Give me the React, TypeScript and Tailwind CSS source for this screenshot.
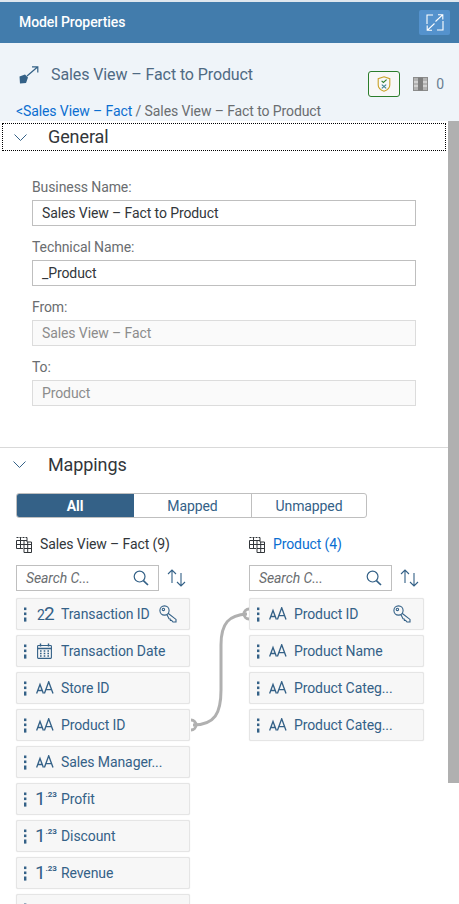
import React from "react";

const blue = "#346187";

function Grip() {
  return (
    <svg width="3" height="15" viewBox="0 0 3 15" className="shrink-0">
      {[0, 5, 10].map((y) => (
        <rect key={y} x="0" y={y + 0.5} width="2.4" height="2.6" fill={blue} />
      ))}
      <rect x="0" y="13" width="2.4" height="1.6" fill={blue} />
    </svg>
  );
}

function KeyIcon() {
  return (
    <svg width="18" height="18" viewBox="0 0 18 18" fill="none" stroke={blue} strokeWidth="1.1" className="shrink-0">
      <circle cx="5.5" cy="5.5" r="4.6" />
      <circle cx="4.4" cy="4.4" r="1.2" />
      <path d="M9 8.2 L17 14.4 V17 H14 L12.6 15.4 L11.4 15.5 L11.2 14 L10 13.8 L8 9.8" />
    </svg>
  );
}

function TableIcon() {
  return (
    <svg width="16" height="17" viewBox="0 0 16 17" fill="none" stroke="#32363a" strokeWidth="1" className="shrink-0">
      <path d="M0.5 1.5 H11" strokeDasharray="2 1" />
      <path d="M0.5 4.5 H11 M0.5 8.5 H15.5 M0.5 12.5 H7 M0.5 4.5 V12.5 M4.5 1.5 V12.5 M8 4.5 V16.5 H15.5 V6 H11 V1.5 M8 12.5 H15.5 M11.7 6 V16.5" />
    </svg>
  );
}

function SearchIcon() {
  return (
    <svg width="16" height="16" viewBox="0 0 16 16" fill="none" stroke={blue} strokeWidth="1.2" className="shrink-0">
      <circle cx="6.6" cy="6.6" r="5.4" />
      <path d="M10.4 10.6 L15 15" strokeWidth="1.7" />
    </svg>
  );
}

function SortIcon() {
  return (
    <svg width="19" height="18" viewBox="0 0 19 18" fill="none" stroke={blue} strokeWidth="1.1" className="shrink-0">
      <path d="M5 14 V1 M1 5 L5 1 L9 5" />
      <path d="M14 4 V17 M10 13 L14 17 L18 13" />
    </svg>
  );
}

function TextIcon() {
  return (
    <svg width="18" height="14" viewBox="0 0 18 14" fill="none" stroke={blue} strokeWidth="1.35" className="shrink-0 -translate-x-px">
      <path d="M0.6 12.5 L4 3.5 L7.4 12.5 M1.8 9.5 H6.2" />
      <path d="M8.4 12.5 L12.7 0.8 L17 12.5 M9.8 8.6 H15.6" />
    </svg>
  );
}

function CalendarIcon() {
  return (
    <svg width="15" height="16" viewBox="0 0 15 16" fill="none" stroke={blue} strokeWidth="1.1" className="shrink-0">
      <rect x="0.6" y="2.5" width="13.8" height="12.9" rx="0.8" />
      <path d="M0.6 5.5 H14.4 M3.5 0.5 V3.5 M11.5 0.5 V3.5" strokeWidth="1.4" />
      <path d="M3 8 H4.6 M6.7 8 H8.3 M10.4 8 H12 M3 10.5 H4.6 M6.7 10.5 H8.3 M10.4 10.5 H12 M3 13 H4.6 M6.7 13 H8.3 M10.4 13 H12" strokeWidth="1.3" />
    </svg>
  );
}

function IntIcon() {
  return (
    <span className="flex w-[18px] items-baseline tracking-[-1px] text-[#346187]">
      <span className="text-[14px] leading-[18px]">2</span>
      <span className="text-[19px] leading-[18px]">2</span>
    </span>
  );
}

function DecIcon() {
  return (
    <span className="flex w-[20px] -translate-x-[2px] items-start text-[#346187]">
      <span className="text-[19px] leading-[18px]">1</span>
      <span className="text-[8px] font-bold leading-[10px]">.23</span>
    </span>
  );
}

type Col = { kind: "text" | "int" | "date" | "dec" | "none"; label: string; pk?: boolean };

const icons = {
  text: <TextIcon />,
  int: <IntIcon />,
  date: <CalendarIcon />,
  dec: <DecIcon />,
  none: null,
};

function Row({ col }: { col: Col }) {
  return (
    <div className="flex h-[32px] shrink-0 items-center rounded-[2px] border border-[#e5e5e5] bg-[#f7f7f7] pl-[7px] pr-[12px] shadow-[0_0_1px_#d9d9d9]">
      <Grip />
      <span className="ml-[10px] flex w-[24px] shrink-0 items-center">{icons[col.kind]}</span>
      <span className="min-w-0 flex-1 truncate text-[14px] text-[#346187]">{col.label}</span>
      {col.pk && <KeyIcon />}
    </div>
  );
}

function Search() {
  return (
    <div className="flex items-center gap-[8px]">
      <div className="flex h-[26px] w-[143px] items-center justify-between border border-[#bfbfbf] bg-white pl-[9px] pr-[9px]">
        <span className="text-[14px] italic text-[#6a6d70]">Search C...</span>
        <SearchIcon />
      </div>
      <SortIcon />
    </div>
  );
}

function Field({ label, value, disabled }: { label: string; value: string; disabled?: boolean }) {
  return (
    <div className="flex flex-col">
      <span className="h-[20px] text-[14px] leading-[20px] text-[#6a6d70]">{label}</span>
      <div
        className={
          disabled
            ? "mt-[3px] flex h-[26px] w-[384px] items-center border border-[#dcdcdc] bg-[#fafafa] px-[9px] text-[14px] text-[#8c8c8c]"
            : "mt-[3px] flex h-[26px] w-[384px] items-center border border-[#bfbfbf] bg-white px-[9px] text-[14px] text-[#32363a]"
        }
      >
        {value}
      </div>
    </div>
  );
}

function Chevron() {
  return (
    <svg width="13" height="7" viewBox="0 0 13 7" fill="none" stroke={blue} strokeWidth="1" className="shrink-0">
      <path d="M0.5 0.5 L6.5 6.5 L12.5 0.5" />
    </svg>
  );
}

const left: Col[] = [
  { kind: "int", label: "Transaction ID", pk: true },
  { kind: "date", label: "Transaction Date" },
  { kind: "text", label: "Store ID" },
  { kind: "text", label: "Product ID" },
  { kind: "text", label: "Sales Manager..." },
  { kind: "dec", label: "Profit" },
  { kind: "dec", label: "Discount" },
  { kind: "dec", label: "Revenue" },
  { kind: "none", label: "" },
];

const right: Col[] = [
  { kind: "text", label: "Product ID", pk: true },
  { kind: "text", label: "Product Name" },
  { kind: "text", label: "Product Categ..." },
  { kind: "text", label: "Product Categ..." },
];

export default function App() {
  return (
    <div className="relative h-[904px] w-[459px] overflow-hidden bg-white font-['Roboto','Liberation_Sans',sans-serif] tracking-[-0.1px]">
      <div className="h-[2px] bg-[#dfe7ee]" />
      <header className="flex h-[41px] items-center justify-between bg-[#427cac] pl-[19px] pr-[9px]">
        <span className="text-[14px] font-medium text-white">Model Properties</span>
        <div className="flex h-[25px] w-[31px] items-center justify-center rounded-[2px] bg-[#5492cd]">
          <svg width="18" height="17" viewBox="0 0 18 17" fill="none" stroke="#fff" strokeWidth="1.1">
            <path d="M7 1 H1 V10 M11 16 H17 V7" />
            <path d="M9.5 7.5 L16.5 0.8 M12 0.8 H16.8 V5.5" />
            <path d="M8.5 9.5 L1.5 16.2 M1.2 11.5 V16.2 H6" />
          </svg>
        </div>
      </header>

      <div className="h-[78px] bg-[#eff4f9] pl-[16px] pt-[22px]">
        <div className="flex items-start pr-[14px]">
          <svg width="20" height="18" viewBox="0 0 20 18" fill="none" className="mt-[1px] ml-[3px] shrink-0">
            <path d="M0.5 10.5 L6 8.5 L9 11.5 L7 17 L1 17.5 Z" fill={blue} />
            <path d="M8 10 L18.5 1 M13 0.8 H18.8 V6.5" stroke={blue} strokeWidth="1.2" />
          </svg>
          <span className="ml-[12px] text-[16px] leading-[20px] text-[#4f6a83]">Sales View – Fact to Product</span>
          <div className="ml-auto mt-[6px] -translate-x-px flex items-center">
            <div className="flex h-[26px] w-[32px] items-center justify-center rounded-[3px] border border-[#2b7d2b] bg-[#f7f7f7]">
              <svg width="14" height="16" viewBox="0 0 14 16" fill="none" strokeWidth="1.1">
                <path d="M7 0.8 L12.8 2.6 V9 C12.8 12 10 14.2 7 15.2 C4 14.2 1.2 12 1.2 9 V2.6 Z" stroke="#c9a227" fill="none" />
                <path d="M4.6 4.8 L6.4 6.4 L9.6 3.6" stroke="#2b7d2b" />
                <path d="M4.8 8.6 L9.2 12.4 M9.2 8.6 L4.8 12.4" stroke="#3a7f8f" />
              </svg>
            </div>
            <svg width="16" height="15" viewBox="0 0 16 15" className="ml-[13px]">
              <rect x="0.5" y="0.5" width="14" height="13" fill="#b3b3b3" stroke="#8c8c8c" />
              <rect x="5" y="0.5" width="5" height="13" fill="#7f7f7f" />
              <path d="M1 5 H5 M1 9 H5 M10 5 H14 M10 9 H14" stroke="#f0f0f0" />
            </svg>
            <span className="ml-[7px] text-[14px] text-[#6a7f92]">0</span>
          </div>
        </div>
        <div className="mt-[5px] text-[14px] leading-[18px] text-[#6a6d70]">
          <span className="text-[#0a6ed1]">&lt;Sales View – Fact</span> / Sales View – Fact to Product
        </div>
      </div>

      <div className="mt-[2px] ml-[2px] flex h-[28px] w-[444px] items-center border border-dotted border-black pl-[11px]">
        <Chevron />
        <span className="ml-[21px] text-[18px] leading-[24px] text-[#32363a]">General</span>
      </div>

      <div className="flex flex-col gap-[11px] pl-[32px] pt-[26px]">
        <Field label="Business Name:" value="Sales View – Fact to Product" />
        <Field label="Technical Name:" value="_Product" />
        <Field label="From:" value="Sales View – Fact" disabled />
        <Field label="To:" value="Product" disabled />
      </div>

      <div className="mt-[41px] h-px w-[448px] bg-[#d9d9d9]" />

      <div className="flex h-[32px] items-center pl-[13px]">
        <Chevron />
        <span className="ml-[22px] text-[18px] text-[#32363a]">Mappings</span>
      </div>

      <div className="ml-[16px] mt-[13px] flex h-[25px] w-[351px] overflow-hidden rounded-[3px] border border-[#bfbfbf] text-[14px] text-[#346187]">
        <div className="-m-px flex w-[118px] items-center justify-center bg-[#346187] pt-px font-bold text-white">All</div>
        <div className="flex w-[119px] items-center justify-center border-r border-[#bfbfbf] pl-px pt-px">Mapped</div>
        <div className="flex flex-1 items-center justify-center pt-px">Unmapped</div>
      </div>

      <div className="ml-[16px] mt-[16px] flex gap-[59px]">
        <div className="flex w-[174px] shrink-0 flex-col">
          <div className="flex h-[20px] items-center gap-[8px] text-[14px] text-[#32363a]">
            <TableIcon />
            <span>Sales View – Fact (9)</span>
          </div>
          <div className="mt-[11px] mb-[7px]"><Search /></div>
          <div className="flex flex-col gap-[5px]">
            {left.map((c, i) => <Row key={i} col={c} />)}
          </div>
        </div>
        <div className="flex w-[175px] shrink-0 flex-col">
          <div className="flex h-[20px] items-center gap-[8px] text-[14px] text-[#0a6ed1]">
            <TableIcon />
            <span>Product (4)</span>
          </div>
          <div className="mt-[11px] mb-[7px]"><Search /></div>
          <div className="flex flex-col gap-[5px]">
            {right.map((c, i) => <Row key={i} col={c} />)}
          </div>
        </div>
      </div>

      {/* connector between mapped columns */}
      <svg width="70" height="130" viewBox="0 0 70 130" fill="none" stroke="#b0b0b0" strokeWidth="3" className="absolute left-[185px] top-[605px]">
        <path d="M8 120 C30 120 36 108 36 85 V40 C36 18 44 10 62 9" />
        <path d="M6 115 A5 5 0 0 1 6 125" />
        <path d="M64 4 A5 5 0 0 0 64 14" />
      </svg>

      {/* scrollbar */}
      <div className="absolute left-[448px] top-[121px] h-[662px] w-[11px] bg-[#b0b0b0]" />
    </div>
  );
}
